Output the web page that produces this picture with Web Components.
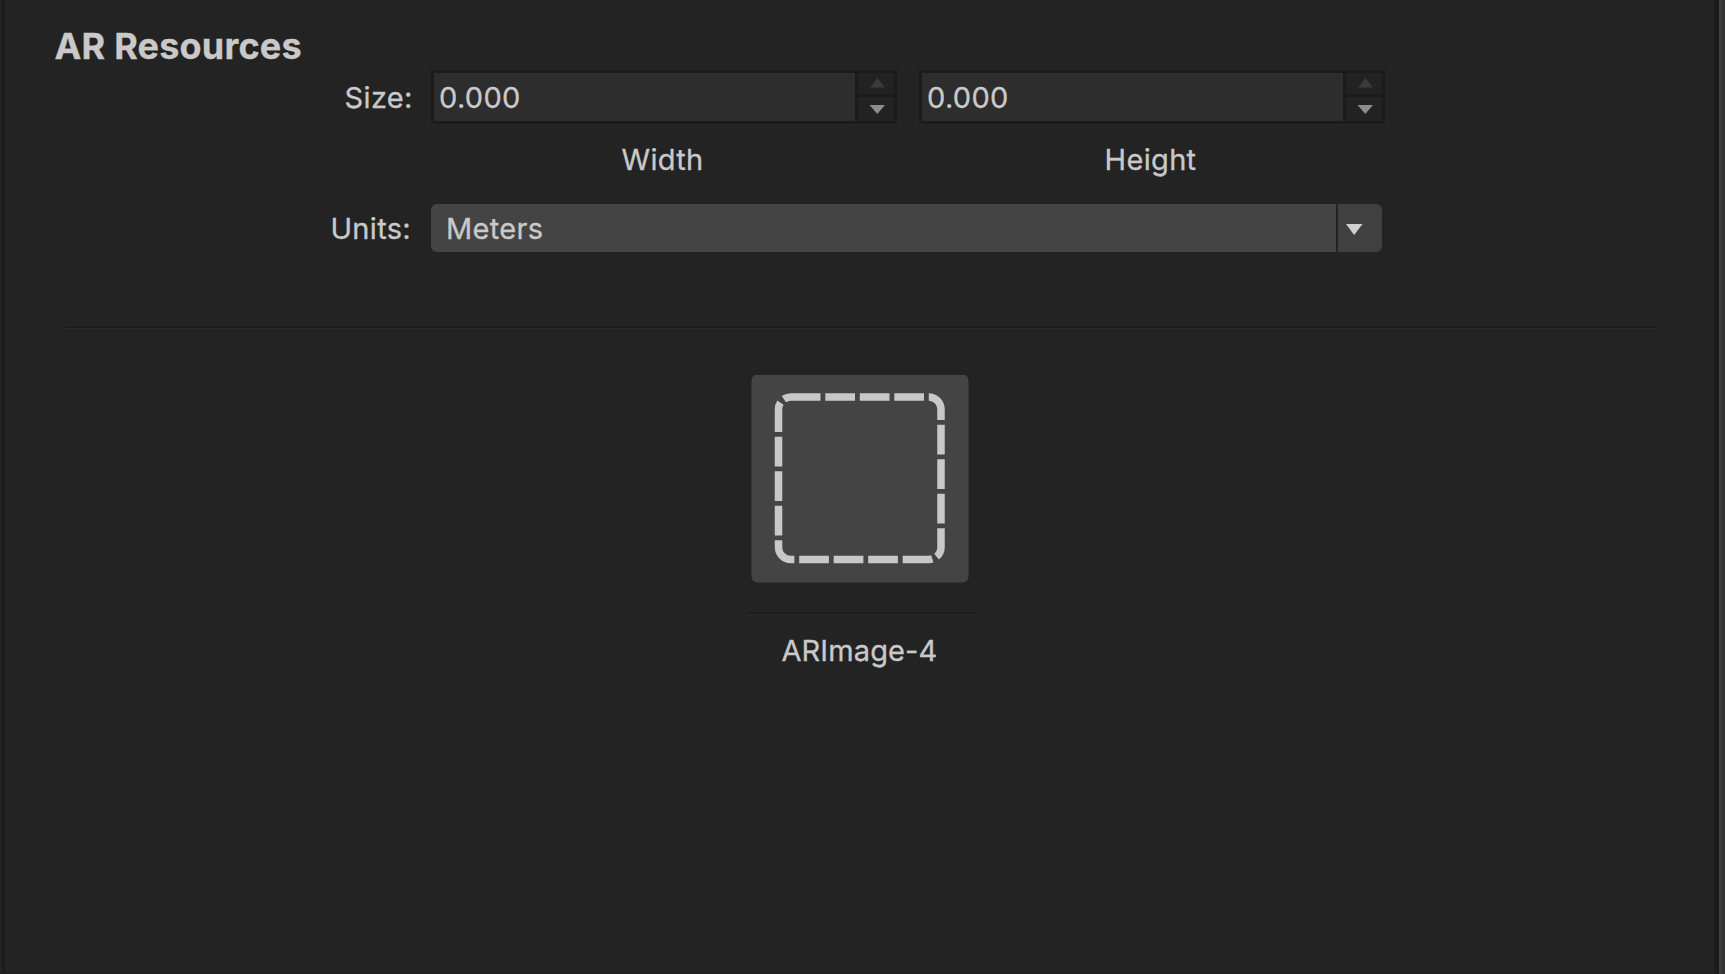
<!DOCTYPE html>
<html lang="en">
<head>
<meta charset="utf-8">
<title>AR Resources</title>
<style>
html, body { margin: 0; height: 100%; background: #232323; overflow: hidden; }
body { font-family: Inter, "Liberation Sans", sans-serif; font-size: 29px; letter-spacing: .32px; color: #c9c9c9; -webkit-text-stroke: .3px #c9c9c9; }
</style>
</head>
<body>
<ar-panel heading="AR Resources">
  <form-row label="Size:" style="--label-end:18.3px;--row-height:56px">
    <number-stepper value="0.000" caption="Width" style="width:466px"></number-stepper>
    <number-stepper value="0.000" caption="Height" style="width:466px;margin-left:22px"></number-stepper>
  </form-row>
  <form-row label="Units:" style="--label-end:20px;--row-height:50px;margin-top:26px">
    <drop-down>Meters</drop-down>
  </form-row>
  <groove-line style="width:1590px;margin:72px 0 0 66px"></groove-line>
  <image-card name="ARImage-4"></image-card>
</ar-panel>
<script>
const define = (tag, render) => customElements.define(tag, class extends HTMLElement {
  connectedCallback() {
    if (this.shadowRoot) return;
    this.attachShadow({ mode: 'open' }).innerHTML = render(this);
  }
});

define('ar-panel', el => `
<style>
:host { display: grid; grid-template-columns: 2px 3px 1fr 5px 3px 3px; height: 100vh; }
.dark { background: #1b1b1b; }
.light { background: #3d3d3d; }
.edge { background: #343434; }
main { display: flex; flex-direction: column; margin-left: -5px; border-bottom: 1px solid #1e1e1e; }
h1 { margin: 0; padding: 22px 0 0 54.5px; font-size: 36px; line-height: 48px; font-weight: 700; letter-spacing: .2px; }
</style>
<span></span><span class="dark"></span>
<main><h1>${el.getAttribute('heading')}</h1><slot></slot></main>
<span class="dark"></span><span class="light"></span><span class="edge"></span>`);

define('form-row', el => `
<style>
:host { display: flex; align-items: flex-start; }
label { box-sizing: border-box; width: 431px; flex: none; padding-right: var(--label-end); text-align: right; line-height: var(--row-height); }
</style>
<label>${el.getAttribute('label')}</label><slot></slot>`);

define('number-stepper', el => `
<style>
:host { display: flex; flex-direction: column; }
.box { display: grid; grid-template-columns: 1fr 36px; column-gap: 3px; height: 48px; padding: 3px; background: #1b1b1b; border-radius: 1px; box-shadow: 0 1px 0 #272727; }
.value { background: #2d2d2d; padding-left: 5px; line-height: 50px; height: 48px; }
.buttons { display: grid; grid-template-rows: 21px 24px; row-gap: 3px; }
.buttons span { background: #222; display: flex; justify-content: center; }
svg { display: block; }
.caption { line-height: 36px; height: 36px; margin-top: 18px; box-sizing: border-box; padding-right: 3px; text-align: center; }
</style>
<div class="box">
  <div class="value">${el.getAttribute('value')}</div>
  <div class="buttons">
    <span><svg width="36" height="21"><path d="M12 14.5 L19.5 5 L27 14.5Z" fill="#3b3b3b"/></svg></span>
    <span><svg width="36" height="24"><path d="M11.5 8 L27 8 L19.3 17Z" fill="#8c8c8c"/></svg></span>
  </div>
</div>
<div class="caption">${el.getAttribute('caption')}</div>`);

define('drop-down', () => `
<style>
:host { display: grid; grid-template-columns: 905px 44px; column-gap: 2px; height: 47.5px; }
.value { background: #444; border-radius: 6px 0 0 6px; padding-left: 15px; line-height: 49px; height: 47.5px; box-sizing: border-box; }
.arrow { background: #404040; border-radius: 0 6px 6px 0; height: 47.5px; }
svg { display: block; }
</style>
<div class="value"><slot></slot></div>
<div class="arrow"><svg width="44" height="47"><path d="M8 20 H24.5 L16.2 31Z" fill="#d0d0d0"/></svg></div>`);

define('groove-line', () => `
<style>
:host { display: block; height: 3px; background: linear-gradient(#1e1e1e 33.3%, #1b1b1b 33.3% 66.6%, #2a2a2a 66.6%); }
</style>`);

define('image-card', el => `
<style>
:host { display: flex; flex-direction: column; width: 226px; margin: 46px 0 0 748px; }
svg { display: block; width: 226px; height: 208px; }
groove-line { margin-top: 29px; }
.name { margin-top: 17px; line-height: 38px; padding-left: 33.5px; letter-spacing: .1px; }
</style>
<svg fill="none">
  <rect x="3.5" y="-.5" width="217" height="208" rx="6" fill="#444"/>
  <path transform="translate(3 -.5)" stroke="#c8c8c8" stroke-width="7.5" stroke-dasharray="29.7 4.8" d="M39.8 22.5 H177.7 A12.3 12.3 0 0 1 190 34.8 V172.7 A12.3 12.3 0 0 1 177.7 185 H39.8 A12.3 12.3 0 0 1 27.5 172.7 V34.8 A12.3 12.3 0 0 1 39.8 22.5"/>
</svg>
<groove-line></groove-line>
<div class="name">${el.getAttribute('name')}</div>`);
</script>
</body>
</html>
